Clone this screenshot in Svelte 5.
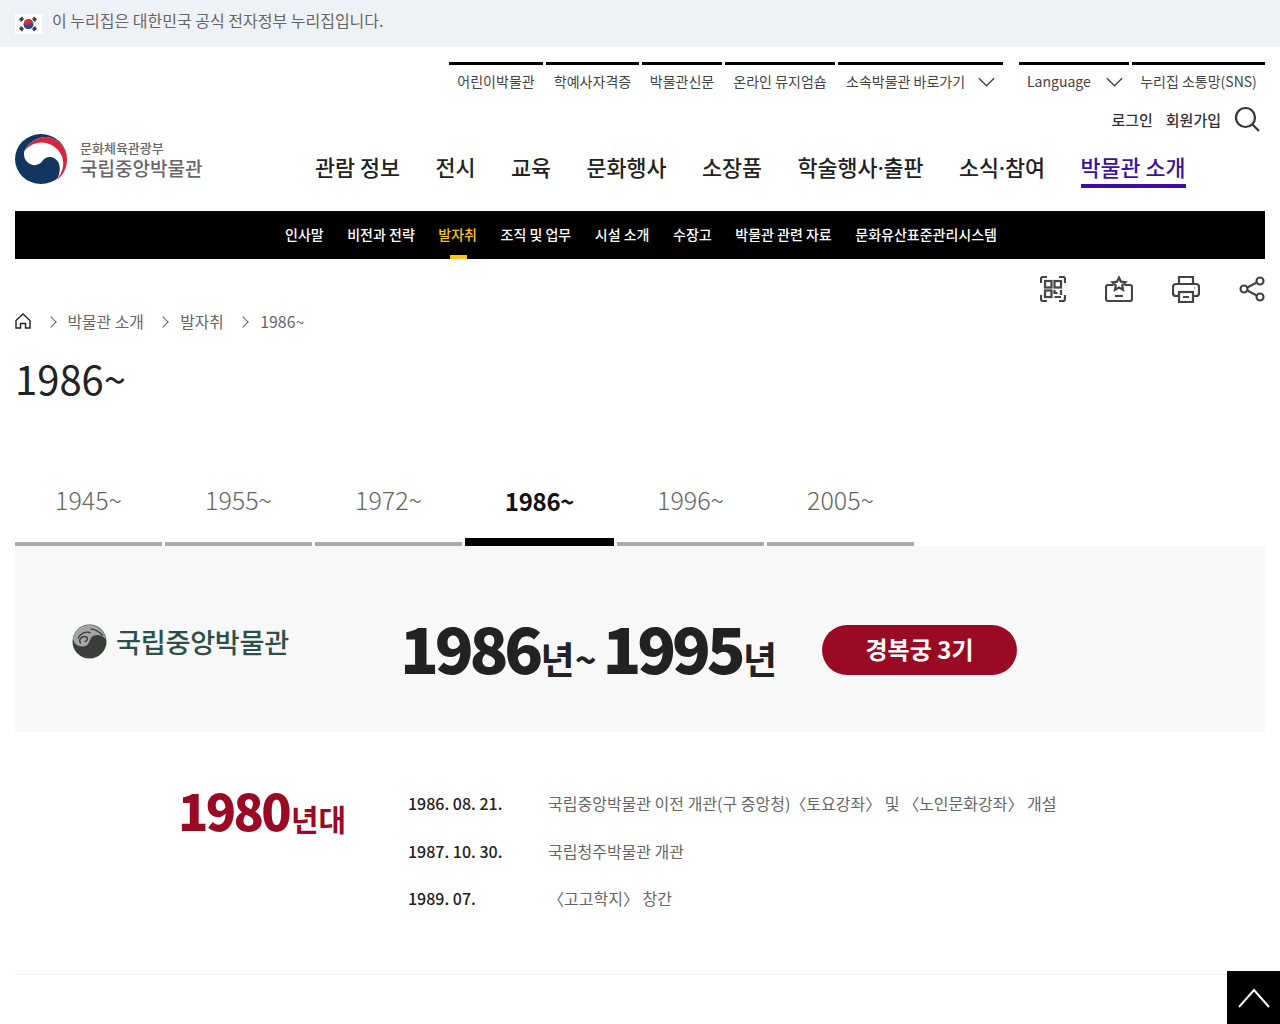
<script>
    const utilLinks = [
        { label: '어린이박물관', width: 94 },
        { label: '학예사자격증', width: 93 },
        { label: '박물관신문', width: 80 },
        { label: '온라인 뮤지엄숍', width: 110 }
    ];
    const mainNav = ['관람 정보', '전시', '교육', '문화행사', '소장품', '학술행사·출판', '소식·참여', '박물관 소개'];
    const subNav = ['인사말', '비전과 전략', '발자취', '조직 및 업무', '시설 소개', '수장고', '박물관 관련 자료', '문화유산표준관리시스템'];
    const tabs = ['1945~', '1955~', '1972~', '1986~', '1996~', '2005~'];
    const history = [
        { date: '1986. 08. 21.', text: '국립중앙박물관 이전 개관(구 중앙청)〈토요강좌〉 및 〈노인문화강좌〉 개설' },
        { date: '1987. 10. 30.', text: '국립청주박물관 개관' },
        { date: '1989. 07.', text: '〈고고학지〉 창간' }
    ];
</script>

<div class="gov">
    <svg class="flag" viewBox="0 0 27 20" width="27" height="20">
        <rect width="27" height="20" fill="#fff" />
        <circle cx="13.5" cy="10" r="5" fill="#d5263a" />
        <path d="M8.600 11a5 5 0 0 0 9.800 0c-.6-1.700-2.900-2-3.900-.6-1 1.300-3.200 1.300-4-.1-.5-.6-1.500-.4-1.900.7z" fill="#1f4e9c" />
        <g stroke="#222" stroke-width="1.600" stroke-linecap="round">
            <path d="M5 5.500l2-2M6 7l2-2M19 3.500l2 2M18 5l2 2M5 14.500l2 2M6 13l2 2M19 16.500l2-2M18 15l2-2" />
        </g>
    </svg>
    <span>이 누리집은 대한민국 공식 전자정부 누리집입니다.</span>
</div>

<div class="page">
    <header>
        <div class="util">
            {#each utilLinks as link}
                <a class="util-item" style="width: {link.width}px">{link.label}</a>
            {/each}
            <a class="util-item drop site">소속박물관 바로가기
                <svg viewBox="0 0 18 10" width="17" height="10"><path d="M1 1l8 8 8-8" /></svg>
            </a>
            <a class="util-item drop lang">Language
                <svg viewBox="0 0 18 10" width="17" height="10"><path d="M1 1l8 8 8-8" /></svg>
            </a>
            <a class="util-item sns">누리집 소통망(SNS)</a>
        </div>

        <div class="member">
            <a>로그인</a>
            <a>회원가입</a>
            <svg class="search" viewBox="0 0 26 26" width="26" height="26">
                <circle cx="11.500" cy="11.500" r="9.500" />
                <path d="M18.500 18.500l6.500 6.500" />
            </svg>
        </div>

        <div class="brand-row">
            <div class="brand">
                <svg viewBox="0 0 50 50" width="52" height="50" preserveAspectRatio="none">
                    <circle cx="25" cy="25" r="25" fill="#12375f" />
                    <path d="M9 17C13 8 22 3 30 3c11 1 20 11 20 22 0 9-4 17-10 21 3-5 4-12 2-17-3-7-11-8-15-3-3 5-9 7-14 3-4-3-5-8-4-12z" fill="#fff" />
                    <path d="M9 17C13 8 22 3 30 3c11 1 20 11 20 22 0 9-4 17-10 21 6-8 8-16 5-24C41 12 30 7 22 9c-6 1-10 4-13 8z" fill="#d8243c" />
                </svg>
                <div class="brand-text">
                    <small>문화체육관광부</small>
                    <strong>국립중앙박물관</strong>
                </div>
            </div>
            <nav class="main-nav">
                {#each mainNav as item, i}
                    <a class:current={i === mainNav.length - 1}>
                        {#each item.split('·') as part, j}{#if j > 0}<span class="dot">·</span>{/if}{part}{/each}
                    </a>
                {/each}
            </nav>
        </div>

        <nav class="sub-nav">
            {#each subNav as item, i}
                <a class:on={i === 2}>{item}</a>
            {/each}
        </nav>
    </header>

    <div class="tools">
        <svg viewBox="0 0 26 26" width="26" height="26">
            <path d="M1 7V3a2 2 0 0 1 2-2h4M19 1h4a2 2 0 0 1 2 2v4M1 19v4a2 2 0 0 0 2 2h4M25 19v4a2 2 0 0 1-2 2h-4" />
            <rect x="5" y="5" width="6.500" height="6.500" /><rect x="14.500" y="5" width="6.500" height="6.500" />
            <rect x="5" y="14.500" width="6.500" height="6.500" /><path d="M14.500 14v3h3M21 14v5M14.500 21h6.500" />
        </svg>
        <svg viewBox="0 0 28 26" width="28" height="26">
            <path d="M8.500 9H3a2 2 0 0 0-2 2v12a2 2 0 0 0 2 2h22a2 2 0 0 0 2-2V11a2 2 0 0 0-2-2h-5.500" />
            <path d="M14 1.500l2 4.200 4.500.6-3.300 3.100.9 4.500-4.100-2.300-4.100 2.300.9-4.500-3.300-3.100 4.500-.6z" />
            <path d="M10 20h8" />
        </svg>
        <svg viewBox="0 0 28 28" width="28" height="28">
            <path d="M7 9V2h14v7" />
            <path d="M7 21H4a3 3 0 0 1-3-3v-6a3 3 0 0 1 3-3h20a3 3 0 0 1 3 3v6a3 3 0 0 1-3 3h-3" />
            <rect x="7" y="17" width="14" height="10" />
            <path d="M11 22h6M22.500 13h.5" />
        </svg>
        <svg viewBox="0 0 26 26" width="26" height="26">
            <circle cx="5" cy="13" r="3.500" /><circle cx="21" cy="5" r="3.500" /><circle cx="21" cy="21" r="3.500" />
            <path d="M8.200 11.400l9.600-4.800M8.200 14.600l9.600 4.800" />
        </svg>
    </div>

    <ol class="crumbs">
        <li>
            <svg class="home" viewBox="0 0 16 16" width="16" height="16">
                <path d="M1 7.500L8 1l7 6.500V15h-4.500v-4.500h-5V15H1z" />
            </svg>
        </li>
        <li>박물관 소개</li>
        <li>발자취</li>
        <li>1986~</li>
    </ol>

    <h1>1986~</h1>

    <div class="tabs">
        {#each tabs as tab, i}
            <a class="tab" class:active={i === 3}>{tab}</a>
        {/each}
    </div>

    <section class="era">
        <div class="era-logo">
            <svg viewBox="0 0 36 36" width="35" height="35">
                <circle cx="18" cy="18" r="17.500" fill="#3a3d3a" />
                <path d="M1 15C3 6 10 1 18 1c9 0 16 7 17 15-3-4-8-6-13-4-4 2-4 10-9 11-6 1-11-2-12-8z" fill="#a3a7a4" />
                <path d="M6 15c2-5 8-8 13-6M9 20c-3-4 1-8 5-7 3 1 2 5-1 5M19 5c5 0 9 3 13 7" fill="none" stroke="#3a3d3a" stroke-width="1.400" />
            </svg>
            <span>국립중앙박물관</span>
        </div>
        <div class="era-years">
            <b>1986</b><i>년~</i>
            <b class="second">1995</b><i>년</i>
        </div>
        <div class="era-pill">경복궁 3기</div>
    </section>

    <section class="decade">
        <h2><b>1980</b><i>년대</i></h2>
        <dl>
            {#each history as row}
                <div class="row">
                    <dt>{row.date}</dt>
                    <dd>{row.text}</dd>
                </div>
            {/each}
        </dl>
    </section>
</div>

<a class="to-top">
    <svg viewBox="0 0 32 20" width="32" height="20"><path d="M1 19L16 2l15 17" /></svg>
</a>

<style>
    :global(body) {
        font-family: "Noto Sans CJK KR", "Noto Sans", sans-serif;
        color: #222;
        background: #fff;
    }

    svg {
        display: block;
        flex: none;
    }

    .gov {
        height: 47px;
        background: #eef1f5;
        display: flex;
        align-items: center;
        gap: 10px;
        padding-left: 15px;
        font-size: 16px;
        color: #666;
    }

    .gov span {
        padding-bottom: 7px;
    }

    .page {
        padding: 0 15px;
        height: 977px;
        overflow: hidden;
    }

    .util {
        display: flex;
        justify-content: flex-end;
        gap: 3px;
        padding-top: 15px;
    }

    .util-item {
        box-sizing: border-box;
        height: 39px;
        border-top: 3px solid #000;
        font-size: 14px;
        line-height: 33px;
        color: #444;
        text-align: center;
        white-space: nowrap;
    }

    .drop {
        display: flex;
        align-items: center;
        justify-content: space-between;
        padding: 0 8px 3px;
    }

    .drop svg {
        fill: none;
        stroke: #444;
        stroke-width: 1.500;
    }

    .site {
        width: 165px;
        margin-right: 13px;
    }

    .lang {
        width: 110px;
        padding-right: 6px;
    }

    .sns {
        width: 133px;
    }

    .member {
        display: flex;
        justify-content: flex-end;
        align-items: center;
        height: 26px;
        margin-top: 5px;
        font-size: 15px;
        font-weight: 500;
        color: #333;
        gap: 14px;
    }

    .member a + a {
        margin-left: -1px;
    }

    .search {
        margin-left: -1px;
        margin-right: 5px;
        fill: none;
        stroke: #333;
        stroke-width: 2.200;
    }

    .brand-row {
        display: flex;
        height: 80px;
        margin-top: -1px;
        align-items: flex-start;
    }

    .brand {
        width: 300px;
        display: flex;
        gap: 13px;
        align-items: center;
        padding-top: 3px;
    }

    .brand-text {
        display: flex;
        flex-direction: column;
        color: #666;
        line-height: 1;
    }

    .brand-text small {
        font-size: 13px;
        font-weight: 500;
        margin-bottom: 4px;
    }

    .brand-text strong {
        font-size: 19px;
        font-weight: 500;
    }

    .main-nav {
        display: flex;
        gap: 35.500px;
        padding-top: 19px;
        font-size: 21.760px;
        font-weight: 500;
        line-height: 33px;
        color: #222;
        white-space: nowrap;
    }

    .main-nav .dot {
        font-family: "Noto Sans", sans-serif;
    }

    .main-nav .current {
        color: #3d0f9e;
        height: 34px;
        border-bottom: 4px solid #3d0f9e;
    }

    .sub-nav {
        box-sizing: border-box;
        height: 48px;
        background: #000;
        display: flex;
        justify-content: center;
        gap: 23.570px;
        padding-left: 2px;
        font-size: 14px;
        font-weight: 500;
        line-height: 46px;
        color: #fff;
    }

    .sub-nav .on {
        color: #f9c41b;
        position: relative;
    }

    .sub-nav .on::after {
        content: '';
        position: absolute;
        left: 50%;
        bottom: 0;
        width: 17px;
        height: 4px;
        margin-left: -8px;
        background: #f9c41b;
    }

    .tools {
        box-sizing: border-box;
        display: flex;
        justify-content: flex-end;
        align-items: center;
        gap: 39px;
        height: 50px;
        padding-top: 10px;
    }

    .tools svg {
        fill: none;
        stroke: #444;
        stroke-width: 2.200;
    }

    .crumbs {
        list-style: none;
        display: flex;
        align-items: center;
        margin: -1px 0 0;
        padding: 0;
        height: 26px;
        font-size: 15.800px;
        color: #666;
    }

    .crumbs li {
        display: flex;
        align-items: center;
    }

    .crumbs li + li::before {
        content: '';
        width: 7px;
        height: 7px;
        margin: 2px 13px 0 0;
        border-top: 1px solid #666;
        border-right: 1px solid #666;
        transform: rotate(45deg);
    }

    .crumbs li:nth-child(n + 2) {
        margin-left: 15.500px;
    }

    .home {
        fill: none;
        stroke: #222;
        stroke-width: 1.400;
    }

    h1 {
        margin: 13px 0 0;
        font-size: 40px;
        font-weight: 400;
        line-height: 62px;
        color: #222;
    }

    .tabs {
        display: flex;
        gap: 3px;
        margin-top: 53px;
    }

    .tab {
        box-sizing: border-box;
        width: 147px;
        height: 84px;
        padding-top: 18px;
        border-bottom: 4px solid #aaa;
        font-size: 25px;
        font-weight: 300;
        line-height: 38px;
        color: #666;
        text-align: center;
    }

    .tab.active {
        width: 149px;
        padding-top: 20px;
        border-bottom: 8px solid #000;
        font-size: 24px;
        font-weight: 700;
        letter-spacing: -0.300px;
        color: #111;
    }

    .era {
        box-sizing: border-box;
        height: 186px;
        padding-top: 22px;
        background: #f8f8f8;
        display: flex;
        align-items: center;
    }

    .era-logo {
        width: 385px;
        padding-left: 57px;
        box-sizing: border-box;
        display: flex;
        align-items: center;
        gap: 9px;
        margin-top: -18px;
        font-size: 27.200px;
        font-weight: 500;
        color: #2b5048;
        letter-spacing: -0.300px;
    }

    .era-years {
        width: 422px;
        display: flex;
        align-items: baseline;
        font-weight: 700;
        color: #222;
        white-space: nowrap;
        margin-top: -8px;
    }

    .era-years b {
        font-size: 64px;
        line-height: 80px;
        letter-spacing: -4.200px;
    }

    .era-years i {
        font-style: normal;
        font-size: 37px;
        margin-left: 1.500px;
    }

    .era-years .second {
        margin-left: 6px;
    }

    .era-pill {
        width: 195px;
        height: 50px;
        border-radius: 25px;
        background: #9a0a24;
        color: #fff;
        font-size: 24px;
        font-weight: 700;
        line-height: 47px;
        text-align: center;
    }

    .decade {
        display: flex;
        height: 243px;
        box-sizing: border-box;
        border-bottom: 1px solid #eee;
        padding-top: 48px;
    }

    h2 {
        margin: -4px 0 0;
        width: 393px;
        padding-left: 163px;
        box-sizing: border-box;
        color: #9a0a24;
        font-weight: 700;
        line-height: 66px;
        white-space: nowrap;
    }

    h2 b {
        font-size: 50px;
        letter-spacing: -2.700px;
    }

    h2 i {
        font-style: normal;
        font-size: 30px;
        margin-left: 2px;
    }

    dl {
        margin: -1px 0 0;
    }

    .row {
        display: flex;
        height: 47.500px;
        line-height: 48px;
        font-size: 16px;
    }

    dt {
        width: 140px;
        font-weight: 500;
        color: #222;
    }

    dd {
        margin: 0;
        color: #666;
    }

    .to-top {
        position: absolute;
        right: 0;
        top: 971px;
        width: 53px;
        height: 53px;
        background: #000;
        display: flex;
        align-items: center;
        justify-content: center;
    }

    .to-top svg {
        fill: none;
        stroke: #fff;
        stroke-width: 2;
    }
</style>
